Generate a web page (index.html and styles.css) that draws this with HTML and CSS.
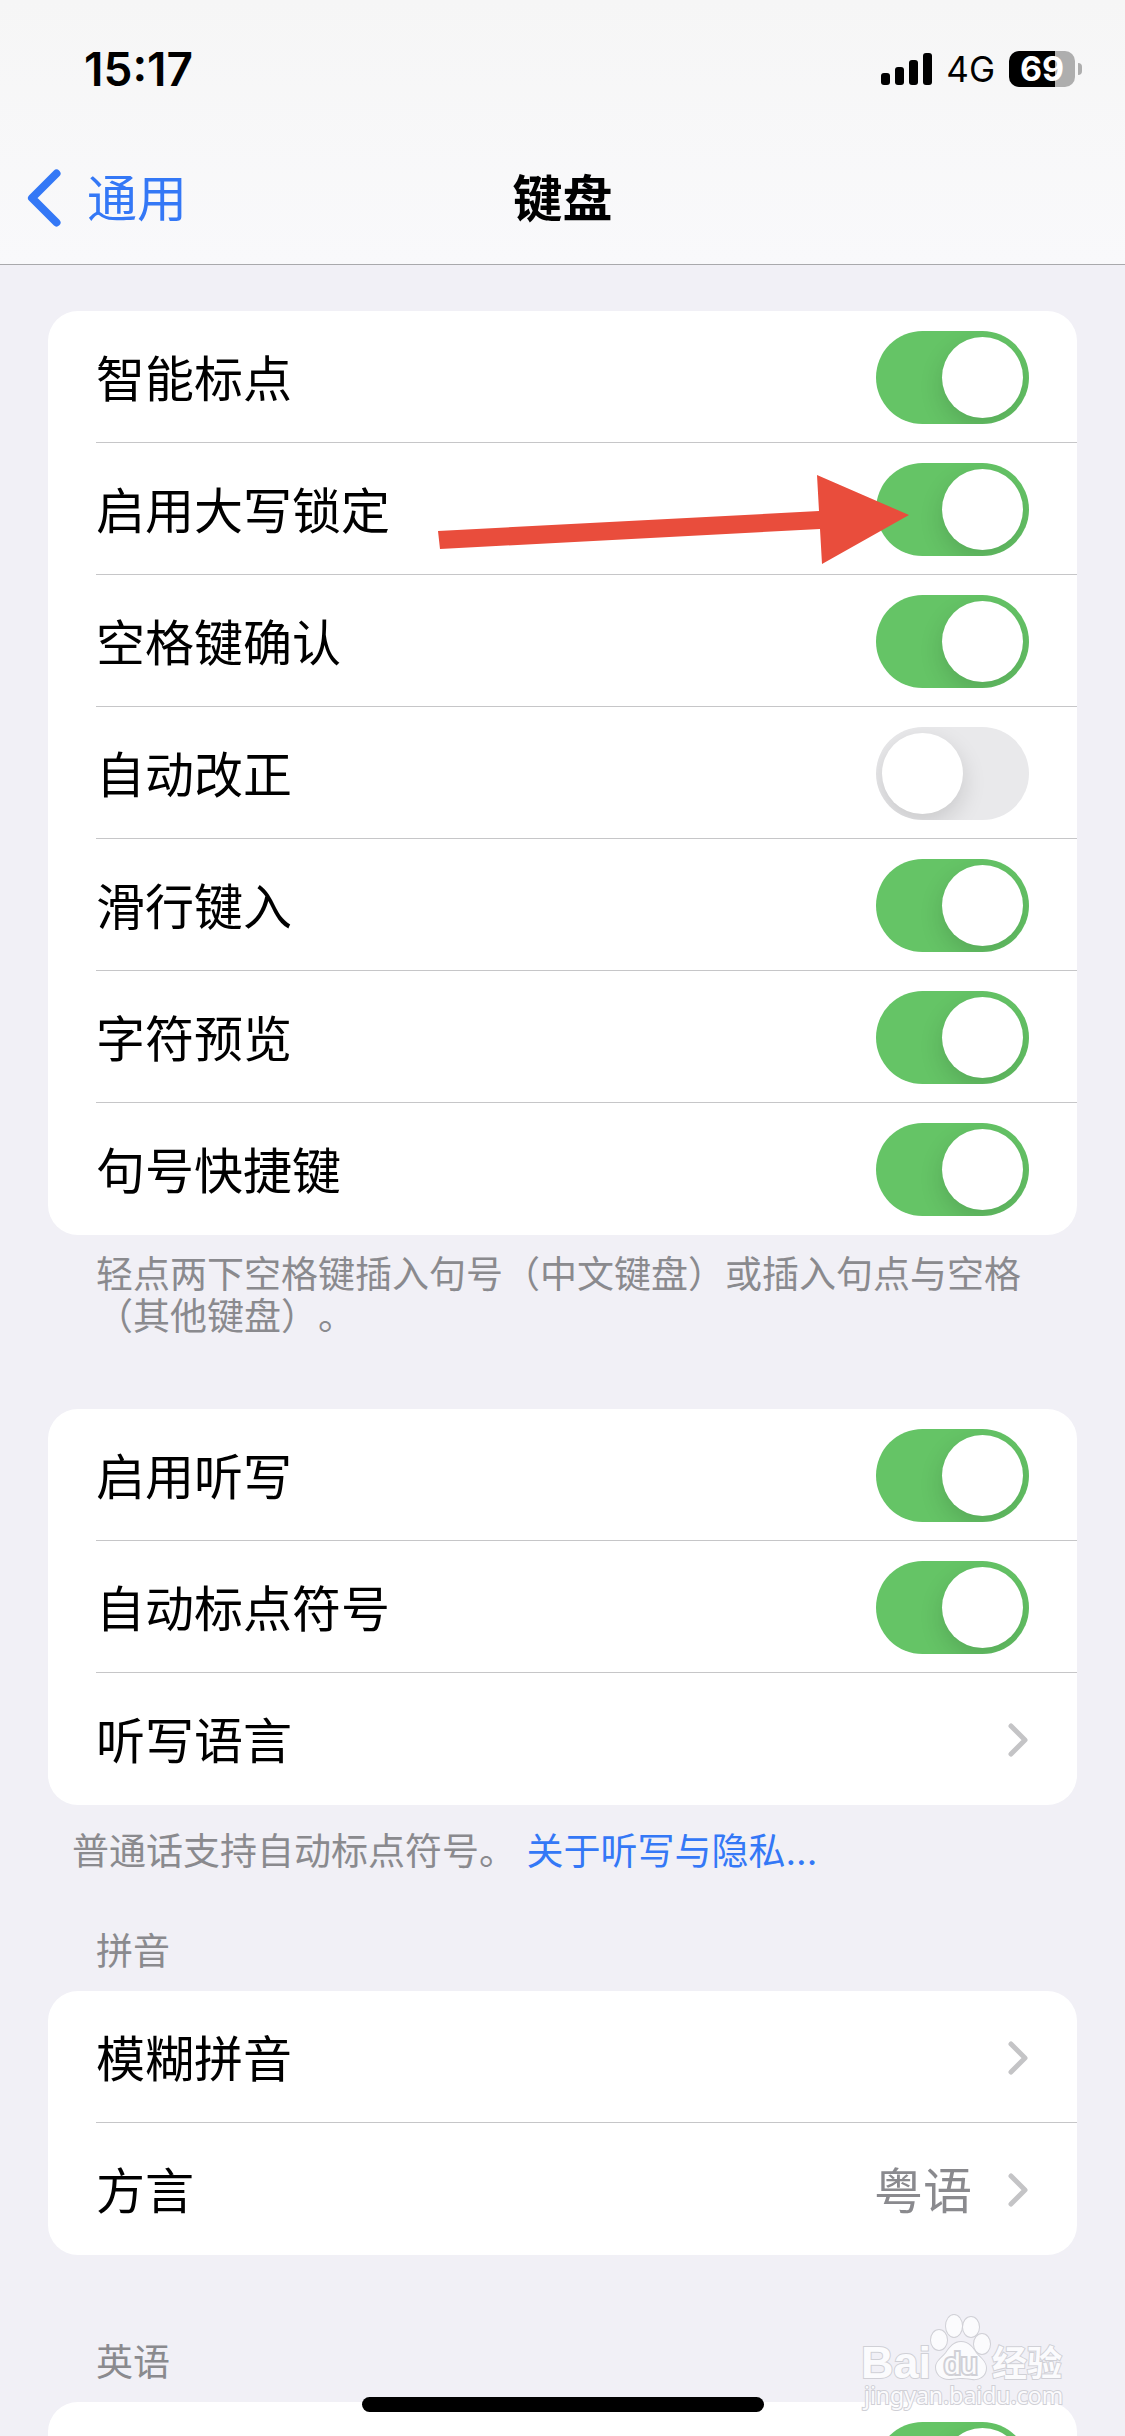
FILE: index.html
```html
<!DOCTYPE html>
<html lang="zh-CN">
<head>
    <meta charset="UTF-8">
    <meta name="viewport" content="width=device-width, initial-scale=1.0">
    <title>键盘</title>
    <link rel="stylesheet" href="styles.css">
</head>
<body>
    <div class="screen">
        <header class="top-bar">
            <div class="status-bar">
                <time class="clock">15:17</time>
                <div class="status-icons">
                    <svg class="signal" viewBox="0 0 51 32" aria-hidden="true">
                        <rect x="0" y="20" width="9" height="12" rx="3"/>
                        <rect x="14" y="14" width="9" height="18" rx="3"/>
                        <rect x="28" y="7" width="9" height="25" rx="3"/>
                        <rect x="42" y="0" width="9" height="32" rx="3"/>
                    </svg>
                    <span class="network">4G</span>
                    <div class="battery"><span>69</span></div>
                </div>
            </div>
            <nav class="nav-bar">
                <a href="#" class="back">
                    <svg viewBox="0 0 34 58" aria-hidden="true">
                        <path d="M29.500 4.500L5 29l24.500 24.500"/>
                    </svg>
                    <span>通用</span>
                </a>
                <h1>键盘</h1>
            </nav>
        </header>

        <main class="settings">
            <section class="group">
                <ul class="card">
                    <li class="row">
                        <label for="smart-punctuation">智能标点</label>
                        <input type="checkbox" class="toggle" id="smart-punctuation" checked>
                    </li>
                    <li class="row">
                        <label for="caps-lock">启用大写锁定</label>
                        <input type="checkbox" class="toggle" id="caps-lock" checked>
                        <svg class="arrow" viewBox="0 0 472 92" aria-hidden="true">
                            <path d="M0 57L381 37 379 1 471 41 384 90 382 55 2 75z"/>
                        </svg>
                    </li>
                    <li class="row">
                        <label for="space-confirm">空格键确认</label>
                        <input type="checkbox" class="toggle" id="space-confirm" checked>
                    </li>
                    <li class="row">
                        <label for="auto-correct">自动改正</label>
                        <input type="checkbox" class="toggle" id="auto-correct">
                    </li>
                    <li class="row">
                        <label for="slide-type">滑行键入</label>
                        <input type="checkbox" class="toggle" id="slide-type" checked>
                    </li>
                    <li class="row">
                        <label for="char-preview">字符预览</label>
                        <input type="checkbox" class="toggle" id="char-preview" checked>
                    </li>
                    <li class="row">
                        <label for="period-shortcut">句号快捷键</label>
                        <input type="checkbox" class="toggle" id="period-shortcut" checked>
                    </li>
                </ul>
                <p class="note">轻点两下空格键插入句号（中文键盘）或插入句点与空格（其他键盘）。</p>
            </section>

            <section class="group">
                <ul class="card">
                    <li class="row">
                        <label for="dictation">启用听写</label>
                        <input type="checkbox" class="toggle" id="dictation" checked>
                    </li>
                    <li class="row">
                        <label for="auto-punctuation">自动标点符号</label>
                        <input type="checkbox" class="toggle" id="auto-punctuation" checked>
                    </li>
                    <li>
                        <a href="#" class="row">
                            <span>听写语言</span>
                            <svg class="chevron" viewBox="0 0 21 34" aria-hidden="true"><path d="M3 3l14 14L3 31"/></svg>
                        </a>
                    </li>
                </ul>
                <p class="note note-wide">普通话支持自动标点符号。 <a href="#">关于听写与隐私...</a></p>
            </section>

            <section class="group">
                <h2>拼音</h2>
                <ul class="card">
                    <li>
                        <a href="#" class="row">
                            <span>模糊拼音</span>
                            <svg class="chevron" viewBox="0 0 21 34" aria-hidden="true"><path d="M3 3l14 14L3 31"/></svg>
                        </a>
                    </li>
                    <li>
                        <a href="#" class="row">
                            <span>方言</span>
                            <span class="value">粤语</span>
                            <svg class="chevron" viewBox="0 0 21 34" aria-hidden="true"><path d="M3 3l14 14L3 31"/></svg>
                        </a>
                    </li>
                </ul>
            </section>

            <section class="group">
                <h2>英语</h2>
                <ul class="card">
                    <li class="row">
                        <input type="checkbox" class="toggle" aria-label="英语" checked>
                    </li>
                </ul>
            </section>
        </main>

        <svg class="watermark" viewBox="0 0 210 105" aria-hidden="true">
            <text class="brand" x="1" y="68">Bai</text>
            <ellipse cx="79" cy="30" rx="8" ry="10"/>
            <ellipse cx="94" cy="16" rx="8" ry="11"/>
            <ellipse cx="111" cy="17" rx="8" ry="10"/>
            <ellipse cx="122" cy="34" rx="8" ry="10"/>
            <path d="M101 32c8 0 12 6 15 11 4 5 10 8 10 15 0 8-7 12-14 11-5-1-8-1-12-1s-7 1-11 1c-8 0-13-5-13-12 0-6 6-9 10-14 4-6 8-11 15-11z"/>
            <text class="du" x="84" y="64">du</text>
            <text class="cjk" x="132" y="66">经验</text>
            <text class="site" x="4" y="94">jingyan.baidu.com</text>
        </svg>
        <div class="home-indicator"></div>
    </div>
</body>
</html>
```
FILE: styles.css
```css
:root {
    --page-color: #f1f0f6;
    --card-color: #fff;
    --accent-color: #3478f6;
    --toggle-color: #65c466;
    --muted-color: #8a8a8e;
    --line-color: #c6c6c8;
    --side: 48px;
}

* {
    margin: 0;
    padding: 0;
    box-sizing: border-box;
}

body {
    background-color: var(--page-color);
    color: #000;
    font-family: Inter, "Noto Sans CJK SC", sans-serif;
    font-size: 49px;
    line-height: 60px;
    text-spacing-trim: space-all;
}

a {
    color: var(--accent-color);
    text-decoration: none;
}

ul {
    list-style: none;
}

.screen {
    position: relative;
    display: flex;
    flex-direction: column;
    height: 100vh;
    overflow: hidden;
}

/* Status bar and navigation */
.top-bar {
    flex: none;
    background: linear-gradient(#f6f6f6, #f9f9fb);
    border-bottom: 1px solid #a9a9ac;
}

.status-bar {
    display: flex;
    justify-content: space-between;
    align-items: center;
    height: 138px;
    padding: 0 43px 0 84px;
}

.clock {
    font-size: 46px;
    font-weight: 600;
}

.status-icons {
    display: flex;
    align-items: center;
    gap: 14px;
}

.signal {
    width: 51px;
    height: 32px;
}

.network {
    font-size: 35px;
}

.battery {
    position: relative;
    width: 66px;
    height: 36px;
    margin-right: 7px;
    border-radius: 10px;
    background: linear-gradient(to right, #000 69%, #aeaeae 69%);
    color: #fff;
    font-size: 34px;
    font-weight: 700;
    line-height: 36px;
    text-align: center;
}

.battery::after {
    content: "";
    position: absolute;
    top: 12px;
    right: -7px;
    width: 4px;
    height: 12px;
    border-radius: 0 4px 4px 0;
    background-color: #aeaeae;
}

.nav-bar {
    display: grid;
    grid-template-columns: 1fr auto 1fr;
    align-items: center;
    height: 126px;
    padding: 0 27px 6px;
}

.nav-bar h1,
.back span {
    padding-top: 2px;
    font-size: 50px;
}

.nav-bar h1 {
    font-weight: 700;
}

.back {
    display: flex;
    align-items: center;
    gap: 26px;
}

.back svg {
    width: 34px;
    height: 58px;
}

.back path {
    fill: none;
    stroke: var(--accent-color);
    stroke-width: 8;
    stroke-linecap: round;
    stroke-linejoin: round;
}

/* Grouped lists */
.settings {
    flex: 1;
    min-height: 0;
    overflow-y: auto;
    scrollbar-width: none;
    padding: 46px var(--side);
}

.card {
    overflow: hidden;
    border-radius: 30px;
    background-color: var(--card-color);
}

.row {
    position: relative;
    display: flex;
    align-items: center;
    height: 132px;
    margin-left: var(--side);
    padding: 1px var(--side) 0 0;
    color: #000;
    box-shadow: inset 0 -1px var(--line-color);
}

.card > :last-child,
.card > :last-child .row {
    box-shadow: none;
}

.row label,
.row span {
    padding-top: 4px;
}

.row > :first-child {
    flex: 1;
}

.row .toggle {
    flex: none;
    margin-left: auto;
}

.row .value {
    color: var(--muted-color);
}

.chevron {
    width: 21px;
    height: 34px;
    margin-left: 36px;
}

.chevron path {
    fill: none;
    stroke: #c4c4c6;
    stroke-width: 5;
    stroke-linecap: round;
    stroke-linejoin: round;
}

.note,
.group h2 {
    color: var(--muted-color);
    font-size: 37px;
    font-weight: 400;
    line-height: 42px;
}

.note {
    padding: 19px 40px 71px 48px;
}

.note-wide {
    padding: 26px 24px 58px;
}

.group h2 {
    padding: 0 48px 18px;
}

.group:last-child {
    padding-top: 87px;
}

/* Switch */
.toggle {
    appearance: none;
    width: 153px;
    height: 93px;
    padding: 6px;
    border-radius: 47px;
    background-color: #e9e9eb;
    overflow: hidden;
    cursor: pointer;
}

.toggle::before {
    content: "";
    display: block;
    width: 81px;
    height: 81px;
    border-radius: 50%;
    background-color: #fff;
    box-shadow: 0 9px 24px rgba(0, 0, 0, 0.14);
}

.toggle:checked {
    background-color: var(--toggle-color);
}

.toggle:checked::before {
    margin-left: auto;
}

/* Overlays */
.arrow {
    position: absolute;
    top: 31px;
    right: 167px;
    width: 472px;
    height: 92px;
    fill: #e94d3c;
}

.watermark {
    position: absolute;
    right: 55px;
    bottom: 21px;
    width: 210px;
    height: 105px;
    fill: #fbfbfd;
    stroke: #d0d0d6;
    stroke-width: 2;
    paint-order: stroke;
}

.watermark .brand {
    font: 700 45px "Liberation Sans", sans-serif;
}

.watermark .du {
    font: 400 30px "Liberation Sans", sans-serif;
    stroke-width: 4;
}

.watermark .cjk {
    font: 700 35px "Noto Sans CJK SC", sans-serif;
}

.watermark .site {
    font: 400 23px "Noto Sans", sans-serif;
}

.home-indicator {
    position: absolute;
    right: 0;
    bottom: 24px;
    left: 0;
    width: 402px;
    height: 15px;
    margin: 0 auto;
    border-radius: 8px;
    background-color: #000;
}
```
